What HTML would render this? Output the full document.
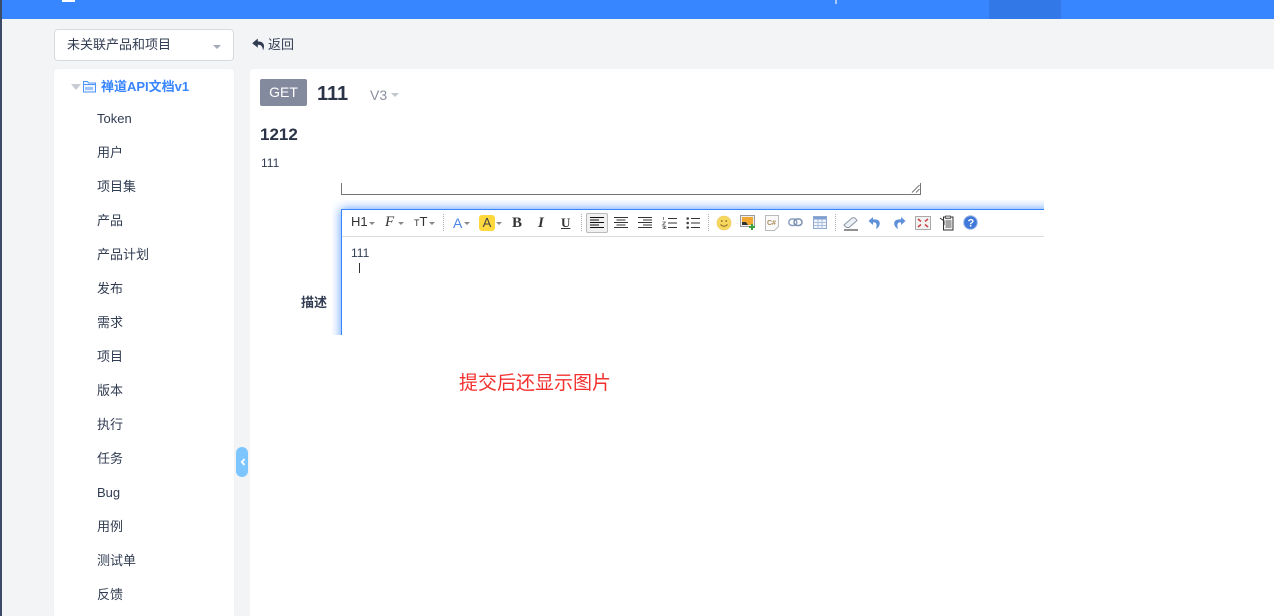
<!DOCTYPE html>
<html lang="zh"><head><meta charset="utf-8"><title>API</title>
<style>
*{box-sizing:border-box}
html,body{margin:0;padding:0;width:1274px;height:616px;overflow:hidden}
body{position:relative;background:#f3f4f6;font-family:"Liberation Sans","Noto Sans CJK SC",sans-serif;font-size:13px;color:#313c52}
.a{position:absolute;white-space:nowrap}
.item{position:absolute;left:97px;white-space:nowrap;line-height:20px;height:20px;font-size:13px;color:#313c52}
svg{position:absolute;display:block;overflow:visible}
.car{position:absolute;width:0;height:0;border-left:3px solid transparent;border-right:3px solid transparent;border-top:3px solid #888}
.sep{position:absolute;top:214px;height:17px;border-left:1px dotted #aaa}
.tb{position:absolute;line-height:16px;white-space:nowrap;color:#333}
</style></head><body>
<div class="a" style="left:0;top:0;width:2px;height:616px;background:#3c4c68"></div>
<div class="a" style="left:2px;top:0;width:1272px;height:19px;background:#3785ff"></div>
<div class="a" style="left:62px;top:0;width:13px;height:2px;background:#fff"></div>
<div class="a" style="left:835px;top:0;width:2px;height:4px;background:#a9c9fb"></div>
<div class="a" style="left:989px;top:0;width:72px;height:19px;background:#3278e6"></div>

<div class="a" style="left:54px;top:29px;width:180px;height:32px;background:#fff;border:1px solid #d7dbe0;border-radius:4px"></div>
<div class="a" style="left:67px;top:35px;line-height:20px;font-size:13px">未关联产品和项目</div>
<div class="a" style="left:213px;top:45px;width:0;height:0;border-left:4px solid transparent;border-right:4px solid transparent;border-top:4px solid #a6aab8"></div>
<svg style="left:252px;top:38px" width="13" height="13" viewBox="0 0 13 13"><path d="M5.800 0.500 L0.200 5.200 L5.800 9.800 V6.800 C8.800 6.700 10.600 8 11 12.500 C13.300 7.500 11.800 3.400 5.800 3.400 Z" fill="#313c52"/></svg>
<div class="a" style="left:268px;top:35px;line-height:20px;font-size:13px">返回</div>

<div class="a" style="left:54px;top:69px;width:180px;height:547px;background:#fff;border-radius:4px 4px 0 0;box-shadow:0 0 2px rgba(0,0,0,.04)"></div>
<div class="a" style="left:71px;top:84px;width:0;height:0;border-left:5px solid transparent;border-right:5px solid transparent;border-top:6px solid #c8cbd3"></div>
<svg style="left:83px;top:80px" width="13" height="13" viewBox="0 0 13 13"><path d="M.5 1.500h4l1 1.500h7v9h-12z" fill="#eef5ff" stroke="#4f94fb"/><path d="M.5 4.500h12" stroke="#4f94fb"/><path d="M2.500 8.500h8" stroke="#4f94fb" stroke-width="3" stroke-dasharray="1 1"/></svg>
<div class="a" style="left:101px;top:77px;line-height:20px;font-size:13px;font-weight:bold;color:#3785ff">禅道API文档v1</div>
<div class="item" style="top:109px">Token</div>
<div class="item" style="top:143px">用户</div>
<div class="item" style="top:177px">项目集</div>
<div class="item" style="top:211px">产品</div>
<div class="item" style="top:245px">产品计划</div>
<div class="item" style="top:279px">发布</div>
<div class="item" style="top:313px">需求</div>
<div class="item" style="top:347px">项目</div>
<div class="item" style="top:381px">版本</div>
<div class="item" style="top:415px">执行</div>
<div class="item" style="top:449px">任务</div>
<div class="item" style="top:483px">Bug</div>
<div class="item" style="top:517px">用例</div>
<div class="item" style="top:551px">测试单</div>
<div class="item" style="top:585px">反馈</div>

<div class="a" style="left:236px;top:447px;width:12px;height:30px;background:#7cc5ff;border-radius:6px"></div>
<svg style="left:240px;top:458px" width="6" height="8" viewBox="0 0 6 8"><path d="M4.500 1 L1.800 4 L4.500 7" fill="none" stroke="#fff" stroke-width="1.800"/></svg>

<div class="a" style="left:250px;top:69px;width:1024px;height:547px;background:#fff;border-radius:4px 0 0 0"></div>
<div class="a" style="left:260px;top:79px;width:47px;height:27px;background:#838a9d;border-radius:2px;color:#fff;text-align:center;line-height:26px;font-size:14px">GET</div>
<div class="a" style="left:317px;top:82px;line-height:24px;font-size:20px;font-weight:bold;color:#2a3347">111</div>
<div class="a" style="left:370px;top:85px;line-height:20px;font-size:14px;color:#8a8f9c">V3</div>
<div class="a" style="left:391px;top:93px;width:0;height:0;border-left:4px solid transparent;border-right:4px solid transparent;border-top:4px solid #c4c6cd"></div>
<div class="a" style="left:260px;top:125px;line-height:20px;font-size:17px;font-weight:bold;color:#2a3347">1212</div>
<div class="a" style="left:261px;top:154px;line-height:18px;font-size:12px">111</div>

<div class="a" style="left:341px;top:183px;width:580px;height:12px;border:1px solid #767676;border-top:0"></div>
<svg style="left:911px;top:184px" width="9" height="9" viewBox="0 0 9 9"><path d="M1 8.500L8.500 1M5 8.500L8.500 5" stroke="#777" stroke-width="1" fill="none"/></svg>

<div class="a" style="left:301px;top:294px;line-height:18px;font-size:13px;font-weight:bold">描述</div>

<!-- editor -->
<div class="a" style="left:332px;top:200px;width:712px;height:135px;overflow:hidden">
<div class="a" style="left:9px;top:9px;width:720px;height:170px;background:#fff;border:1px solid #3785ff;border-width:1px 0 0 1px;box-shadow:0 0 10px rgba(55,133,255,.85)"></div>
</div>
<div class="a" style="left:342px;top:236px;width:702px;height:1px;background:#dcdcdc"></div>

<div class="tb" style="left:351px;top:214px;font-size:13px">H1</div><div class="car" style="left:369px;top:222px"></div>
<div class="tb" style="left:385px;top:214px;font-family:'Liberation Serif',serif;font-style:italic;font-size:15px">F</div><div class="car" style="left:398px;top:222px"></div>
<div class="tb" style="left:414px;top:214px;font-size:13px"><span style="font-size:9px">T</span>T</div><div class="car" style="left:429px;top:222px"></div>
<div class="sep" style="left:443px"></div>
<div class="tb" style="left:453px;top:215px;font-size:14px;color:#4a86e8">A</div><div class="car" style="left:464px;top:222px"></div>
<div class="a" style="left:479px;top:215px;width:16px;height:16px;background:#ffd83d;border-radius:3px;text-align:center;line-height:16px;font-size:13px;color:#444">A</div><div class="car" style="left:496px;top:222px"></div>
<div class="tb" style="left:512px;top:215px;font-family:'Liberation Serif',serif;font-weight:bold;font-size:15px">B</div>
<div class="tb" style="left:538px;top:215px;font-family:'Liberation Serif',serif;font-weight:bold;font-style:italic;font-size:15px">I</div>
<div class="tb" style="left:561px;top:215px;font-family:'Liberation Serif',serif;font-weight:bold;font-size:13px;text-decoration:underline">U</div>
<div class="sep" style="left:581px"></div>
<div class="a" style="left:586px;top:213px;width:22px;height:20px;background:#f0f0f0;border:1px solid #bbb;border-radius:2px"></div>
<svg style="left:590px;top:216px" width="14" height="14" viewBox="0 0 14 14"><path d="M0 1.500h14M0 4h9M0 6.500h14M0 9h9M0 11.500h14" stroke="#111" stroke-width="1"/></svg>
<svg style="left:614px;top:216px" width="14" height="14" viewBox="0 0 14 14"><path d="M0 1.500h14M2.500 4h9M0 6.500h14M2.500 9h9M0 11.500h14" stroke="#333" stroke-width="1"/></svg>
<svg style="left:638px;top:216px" width="14" height="14" viewBox="0 0 14 14"><path d="M0 1.500h14M5 4h9M0 6.500h14M5 9h9M0 11.500h14" stroke="#333" stroke-width="1"/></svg>
<svg style="left:662px;top:216px" width="15" height="14" viewBox="0 0 15 14"><path d="M6 2.500h9M6 7h9M6 11.500h9" stroke="#333"/><path d="M1.500 1v3M.5 6h3l-3 3h3M.5 10.500h3l-1.500 1 1.500 1h-3" stroke="#666" fill="none" stroke-width=".8"/></svg>
<svg style="left:686px;top:216px" width="14" height="14" viewBox="0 0 14 14"><path d="M5 2.500h9M5 7h9M5 11.500h9" stroke="#333"/><circle cx="1.700" cy="2.500" r="1.300" fill="#444"/><circle cx="1.700" cy="7" r="1.300" fill="#444"/><circle cx="1.700" cy="11.500" r="1.300" fill="#444"/></svg>
<div class="sep" style="left:708px"></div>
<svg style="left:716px;top:215px" width="16" height="16" viewBox="0 0 16 16"><circle cx="8" cy="8" r="7" fill="#f6d860" stroke="#e8c650" stroke-width=".6"/><circle cx="5.800" cy="6" r=".9" fill="#8a6a20"/><circle cx="10.200" cy="6" r=".9" fill="#8a6a20"/><path d="M4.500 9.500 Q8 13 11.500 9.500" stroke="#8a6a20" fill="none"/></svg>
<svg style="left:740px;top:215px" width="16" height="16" viewBox="0 0 16 16"><rect x=".5" y=".5" width="14" height="11" fill="#eee" stroke="#999"/><rect x="2" y="2" width="11" height="8" fill="#f0a830"/><path d="M2 10V7h4l2 3z" fill="#333"/><path d="M12 9v6M9 12h6" stroke="#3aa040" stroke-width="2"/></svg>
<svg style="left:765px;top:215px" width="14" height="16" viewBox="0 0 14 16"><path d="M.5.500h13v11l-4 4h-9z" fill="#fafafa" stroke="#bbb"/><text x="2" y="10" font-size="7" font-weight="bold" fill="#a88a55" font-family="Liberation Sans">C#</text></svg>
<svg style="left:788px;top:218px" width="15" height="9" viewBox="0 0 15 9"><rect x=".8" y="1" width="8" height="6.500" rx="3.200" fill="none" stroke="#8b9fc0" stroke-width="1.500"/><rect x="6" y="1" width="8" height="6.500" rx="3.200" fill="none" stroke="#7c90b0" stroke-width="1.500"/></svg>
<svg style="left:813px;top:216px" width="14" height="13" viewBox="0 0 14 13"><rect x=".5" y=".5" width="13" height="12" fill="#f2f6fc" stroke="#90a8cc"/><rect x="1" y="1" width="12" height="2.500" fill="#7fa0d4"/><path d="M1 6.500h12M1 9.500h12M5 3.500v9M9 3.500v9" stroke="#a8bcdc"/></svg>
<div class="sep" style="left:835px"></div>
<svg style="left:843px;top:216px" width="16" height="15" viewBox="0 0 16 15"><path d="M1 9 L9 2 Q11 1 12.500 2.500 L14 4.500 L6 11.500 H3.500 Z" fill="#eef1f6" stroke="#8c96a6"/><path d="M1 14h14" stroke="#222"/></svg>
<svg style="left:868px;top:216px" width="14" height="14" viewBox="0 0 14 14"><path d="M5 1 L.5 5 L5 9 V6.500 C8 5.800 9.500 7.500 8 13 C13 10.500 14 2.500 5 3.500 Z" fill="#5f8fd8"/></svg>
<svg style="left:892px;top:216px" width="14" height="14" viewBox="0 0 14 14"><path d="M9 1 L13.500 5 L9 9 V6.500 C6 5.800 4.500 7.500 6 13 C1 10.500 0 2.500 9 3.500 Z" fill="#5f8fd8"/></svg>
<svg style="left:915px;top:216px" width="16" height="14" viewBox="0 0 16 14"><rect x=".5" y=".5" width="15" height="13" fill="#f2f2f2" stroke="#aaa"/><path d="M3 3l3 2.500M13 3l-3 2.500M3 11l3-2.500M13 11l-3-2.500" stroke="#c44" stroke-width="1.500"/></svg>
<svg style="left:940px;top:215px" width="14" height="16" viewBox="0 0 14 16"><path d="M3.500 2h9.500v13H3.500z" fill="#f4f4f4" stroke="#333"/><path d="M0 3l4 3v4" fill="none" stroke="#333"/><path d="M5.500 1h5v2.500h-5z" fill="#ccc" stroke="#444" stroke-width=".7"/><path d="M5.500 6h6M5.500 8h6M5.500 10h6M5.500 12h6" stroke="#555"/></svg>
<svg style="left:963px;top:215px" width="15" height="15" viewBox="0 0 15 15"><circle cx="7.500" cy="7.500" r="6.800" fill="#3f78d8" stroke="#9db9e8"/><text x="4.500" y="11.500" font-size="11" font-weight="bold" fill="#fff" font-family="Liberation Sans">?</text></svg>

<div class="a" style="left:351px;top:245px;line-height:16px;font-size:12px">111</div>
<div class="a" style="left:359px;top:263px;width:1px;height:10px;background:#333"></div>

<div class="a" style="left:459px;top:372px;line-height:24px;font-size:19px;color:#f2312f">提交后还显示图片</div>
</body></html>
